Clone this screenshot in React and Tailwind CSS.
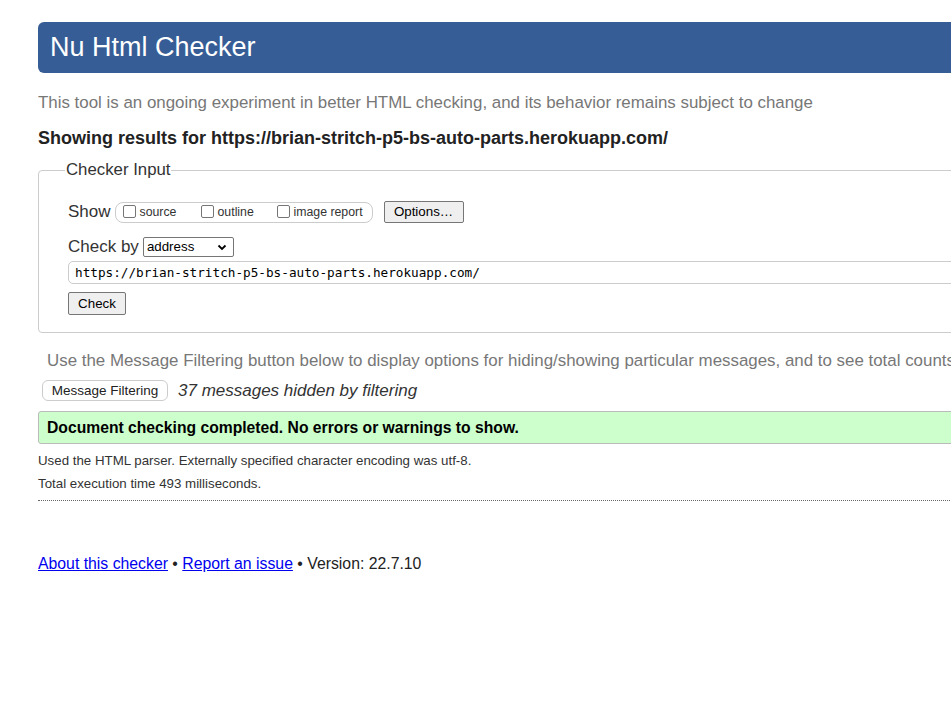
export default function App() {
  const cb = (
    <span className="inline-block w-[13px] h-[13px] border border-[#767676] rounded-[2px] bg-white mr-[4px] translate-y-[-1px] align-middle"></span>
  );
  return (
    <div className="w-[951px] h-[704px] overflow-hidden bg-white text-[#222] font-['Liberation_Sans',Arial,sans-serif]">
      <div className="ml-[38px] w-[1100px] pt-[22px]">
        <div className="h-[51px] bg-[#365d95] rounded-[6px] pl-[12px] flex items-center">
          <h1 className="text-[27px] text-white leading-none">Nu Html Checker</h1>
        </div>
        <p className="mt-[20px] text-[16.9px] leading-[20px] text-[#777]">
          This tool is an ongoing experiment in better HTML checking, and its behavior remains subject to change
        </p>
        <p className="mt-[15px] text-[18px] leading-[20px] font-bold text-[#222]">
          Showing results for https://brian-stritch-p5-bs-auto-parts.herokuapp.com/
        </p>
        <fieldset className="mt-[12px] border border-[#ccc] rounded-[4px] pl-[29px] pb-[17px] pt-0">
          <legend className="text-[16.8px] px-[1px] ml-[-3px] text-[#333] leading-[20px]">Checker Input</legend>
          <div className="mt-[21px] flex items-center h-[22px]">
            <span className="text-[17px] text-[#333] mr-[4px]">Show</span>
            <div className="h-[21px] w-[258px] border border-[#ccc] rounded-[8px] flex items-center pl-[7px] text-[12.3px] text-[#333]">
              <span className="w-[78px] flex items-center">{cb}source</span>
              <span className="w-[76px] flex items-center">{cb}outline</span>
              <span className="flex items-center">{cb}image report</span>
            </div>
            <button className="ml-[11px] h-[22px] w-[80px] border border-[#767676] bg-[#efefef] rounded-[2px] text-[13.33px] text-black">Options…</button>
          </div>
          <div className="mt-[14px] flex items-center h-[20px]">
            <span className="text-[17px] text-[#333] mr-[4px]">Check by</span>
            <div className="h-[20px] w-[91px] border border-[#767676] rounded-[2px] flex items-center justify-between px-[3px] text-[13.33px] text-black">
              <span>address</span>
              <svg width="12" height="12" viewBox="0 0 12 12" className="mr-[2px]"><path d="M2.5 4.5 L6 8 L9.5 4.5" fill="none" stroke="#000" strokeWidth="1.8" /></svg>
            </div>
          </div>
          <div className="mt-[4px] h-[23px] border border-[#ccc] rounded-[5px] flex items-center pl-[6px] font-['DejaVu_Sans_Mono',monospace] text-[12.7px] text-black">
            https://brian-stritch-p5-bs-auto-parts.herokuapp.com/
          </div>
          <button className="mt-[8px] h-[23px] w-[58px] border border-[#767676] bg-[#efefef] rounded-[2px] text-[13.33px] text-black">Check</button>
        </fieldset>
        <p className="mt-[18px] ml-[9px] text-[16.9px] leading-[20px] text-[#777] whitespace-nowrap">
          Use the Message Filtering button below to display options for hiding/showing particular messages, and to see total counts of errors and warnings.
        </p>
        <div className="mt-[9px] ml-[4px] flex items-center h-[21px]">
          <button className="h-[21px] w-[126px] border border-[#ccc] rounded-[6px] bg-white text-[13.5px] text-[#222]">Message Filtering</button>
          <span className="ml-[10px] italic text-[17px] text-[#333]">37 messages hidden by filtering</span>
        </div>
        <div className="mt-[10px] h-[33px] bg-[#ccffcc] border border-[#bbb] rounded-[3px] flex items-center pl-[8px]">
          <span className="font-bold text-[15.7px] text-black">Document checking completed. No errors or warnings to show.</span>
        </div>
        <p className="mt-[9px] text-[13.3px] leading-[16px] text-[#333]">Used the HTML parser. Externally specified character encoding was utf-8.</p>
        <p className="mt-[7px] text-[13.3px] leading-[16px] text-[#333]">Total execution time 493 milliseconds.</p>
        <div className="mt-[8px] border-t border-dotted border-[#666]"></div>
        <p className="mt-[53px] text-[15.8px] leading-[20px] text-[#222]">
          <a href="#" className="text-[#0000ee] underline">About this checker</a>
          {" • "}
          <a href="#" className="text-[#0000ee] underline">Report an issue</a>
          {" • Version: 22.7.10"}
        </p>
      </div>
    </div>
  );
}
